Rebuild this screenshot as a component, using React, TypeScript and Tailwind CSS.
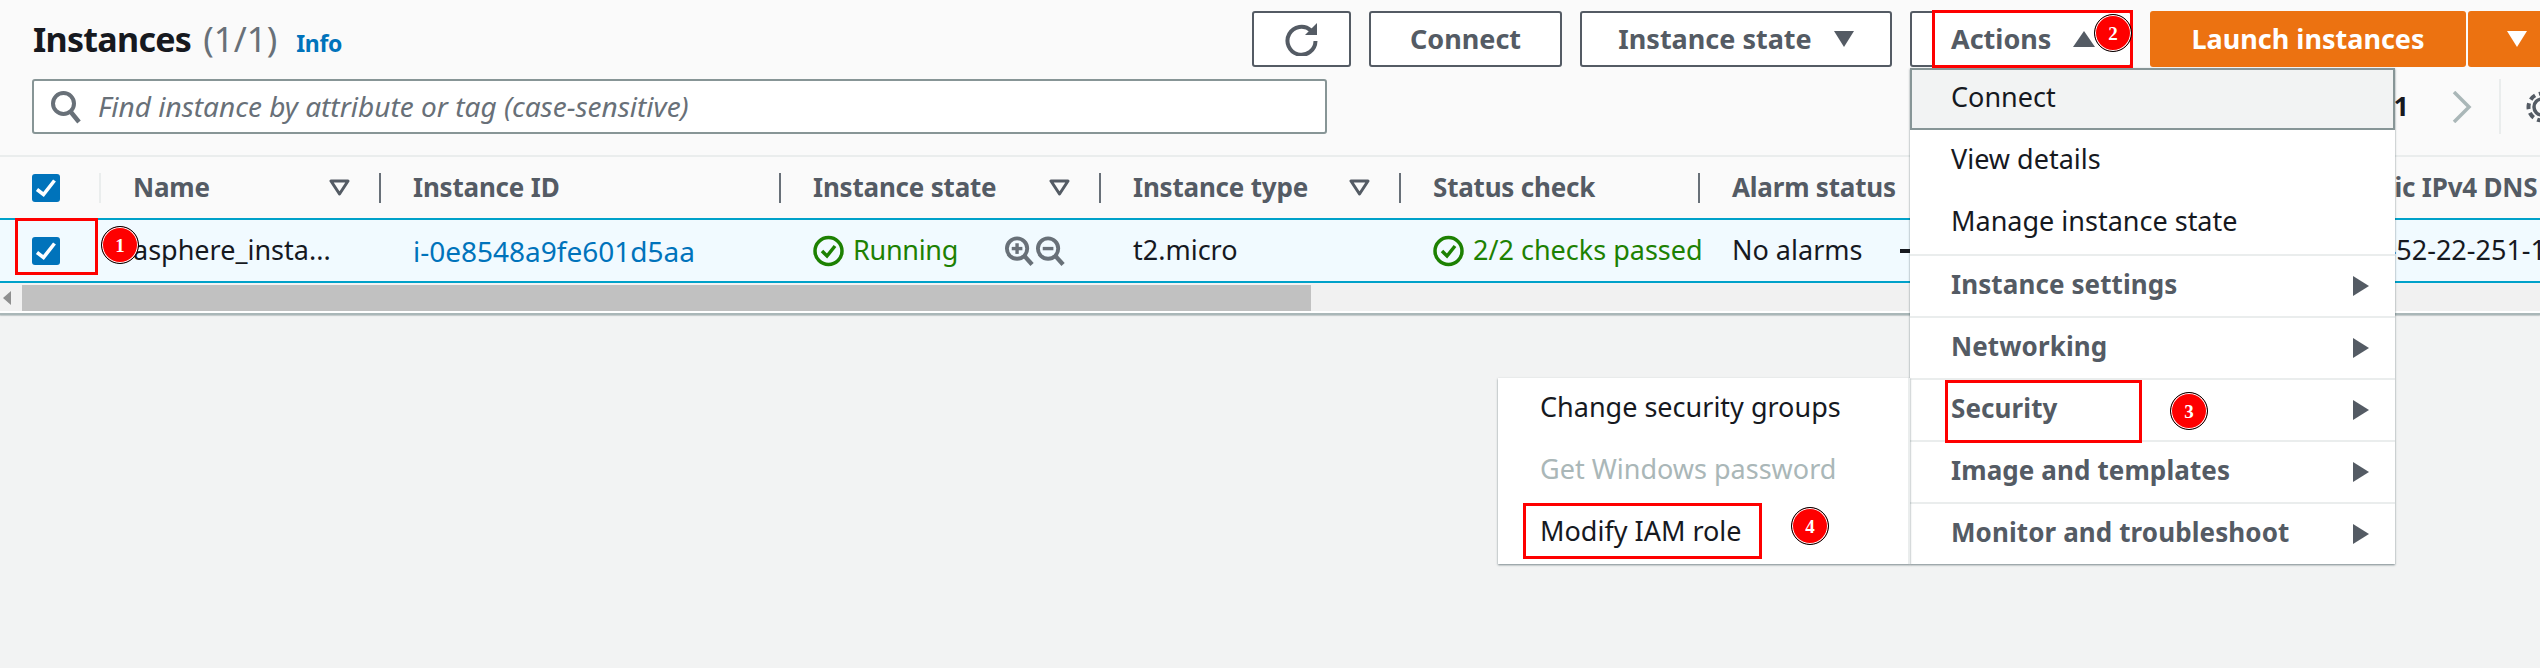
const font = "font-['Noto_Sans','Open_Sans',sans-serif]";

function Badge({ n, className }: { n: number; className: string }) {
  return (
    <span
      className={`absolute z-30 flex h-[38px] w-[38px] items-center justify-center rounded-full border border-black bg-[#fe0000] font-['Liberation_Serif',serif] text-[19px] font-bold leading-none text-white shadow-[inset_0_0_0_1px_#fff] ${className}`}
    >
      {n}
    </span>
  );
}

function RedBox({ className }: { className: string }) {
  return <div className={`absolute z-20 border-[3px] border-[#fe0000] ${className}`} />;
}

function FilterIcon() {
  return (
    <svg width="21" height="17" viewBox="0 0 21 17" className="shrink-0">
      <path d="M2 2h17l-8.5 13z" fill="none" stroke="#545b64" strokeWidth="3" strokeLinejoin="round" />
    </svg>
  );
}

function CheckBox() {
  return (
    <span className="block h-[28px] w-[28px] rounded-[3px] bg-[#0073bb]">
      <svg width="28" height="28" viewBox="0 0 28 28">
        <path d="M5 15.5l6.5 5L22.5 6.5" fill="none" stroke="#fff" strokeWidth="3.6" />
      </svg>
    </span>
  );
}

function StatusOk() {
  return (
    <svg width="31" height="32" viewBox="0 0 31 32" className="shrink-0">
      <circle cx="15.5" cy="16" r="13.5" fill="none" stroke="#1d8102" strokeWidth="3.5" />
      <path d="M9 16l5 5 8-10" fill="none" stroke="#1d8102" strokeWidth="3.5" />
    </svg>
  );
}

function Magnifier({ minus }: { minus?: boolean }) {
  return (
    <svg width="30" height="32" viewBox="0 0 31 32" className="shrink-0">
      <circle cx="13.5" cy="13.5" r="10.5" fill="none" stroke="#687078" strokeWidth="4" />
      <path d="M21 21l8 9" stroke="#687078" strokeWidth="4.5" />
      <path d="M8 13.5h11" stroke="#687078" strokeWidth="3.5" />
      {minus ? null : <path d="M13.5 8v11" stroke="#687078" strokeWidth="3.5" />}
    </svg>
  );
}

function MenuArrow() {
  return (
    <svg width="16" height="20" viewBox="0 0 16 20" className="shrink-0">
      <path d="M0 0l16 10L0 20z" fill="#545b64" />
    </svg>
  );
}

function HeadCell({ label, width, filter, first }: { label: string; width: string; filter?: boolean; first?: boolean }) {
  return (
    <div className={`flex h-full shrink-0 items-center ${width}`}>
      <span className={`h-[30px] w-[2px] shrink-0 ${first ? "bg-[#eaeded]" : "bg-[#687078]"}`} />
      <span className="ml-[32px] whitespace-nowrap pb-[1px] text-[26px] font-bold tracking-[-0.2px] text-[#545b64]">{label}</span>
      {filter ? (
        <span className="ml-auto mr-[29px]">
          <FilterIcon />
        </span>
      ) : null}
    </div>
  );
}

function RowCell({ width, children }: { width: string; children: React.ReactNode }) {
  return (
    <div className={`flex h-full shrink-0 items-center whitespace-nowrap pl-[34px] text-[27px] ${width}`}>
      {children}
    </div>
  );
}

function MenuItem({ label, group, divider }: { label: string; group?: boolean; divider?: boolean }) {
  return (
    <div
      className={`flex h-[62px] items-center justify-between pl-[41px] pr-[26px] ${
        group ? "text-[26px] font-bold tracking-[0.1px] text-[#545b64]" : "text-[27px] text-[#16191f]"
      } ${divider ? "border-t-2 border-[#eaeded]" : ""}`}
    >
      <span className="pb-[4px]">{label}</span>
      {group ? <MenuArrow /> : null}
    </div>
  );
}

export default function App() {
  return (
    <div className={`relative h-[668px] w-[2540px] overflow-hidden bg-[#f2f3f3] ${font}`}>
      <div className="bg-[#fafafa] pt-[11px]">
        <div className="flex h-[56px] items-center pl-[33px]">
          <div className="flex flex-1 items-baseline whitespace-nowrap">
            <span className="text-[34px] font-bold tracking-[-0.7px] text-[#16191f]">Instances</span>
            <span className="ml-[12px] text-[35px] text-[#687078]">(1/1)</span>
            <span className="ml-[19px] text-[23px] font-bold tracking-[-0.4px] text-[#0073bb]">Info</span>
          </div>
          <div className="flex h-full items-stretch text-[27px] font-bold text-[#545b64]">
            <button className="flex w-[99px] items-center justify-center rounded-[3px] border-2 border-[#545b64] bg-white">
              <svg width="34" height="34" viewBox="0 0 34 34">
                <path d="M26 8.5a14 14 0 1 0 4.5 10.5" fill="none" stroke="#545b64" strokeWidth="4" />
                <path d="M20 13h12V1z" fill="#545b64" />
              </svg>
            </button>
            <button className="ml-[18px] w-[193px] rounded-[3px] border-2 border-[#545b64] bg-white">Connect</button>
            <button className="ml-[18px] flex w-[312px] items-center justify-center gap-[22px] rounded-[3px] border-2 border-[#545b64] bg-white">
              Instance state
              <svg width="20" height="16" viewBox="0 0 20 16">
                <path d="M0 0h20L10 16z" fill="#545b64" />
              </svg>
            </button>
            <button className="ml-[18px] flex w-[222px] items-center rounded-[3px] border-2 border-[#545b64] bg-white pl-[39px]">
              Actions
              <svg width="22" height="16" viewBox="0 0 22 16" className="ml-[22px]">
                <path d="M0 16h22L11 0z" fill="#545b64" />
              </svg>
            </button>
            <button className="ml-[18px] w-[316px] rounded-[3px] bg-[#ec7211] text-white">Launch instances</button>
            <button className="ml-[2px] flex w-[72px] items-center rounded-l-[3px] bg-[#ec7211] pl-[39px]">
              <svg width="20" height="16" viewBox="0 0 20 16">
                <path d="M0 0h20L10 16z" fill="#fff" />
              </svg>
            </button>
          </div>
        </div>

        <div className="mt-[12px] flex h-[55px] items-center pl-[32px]">
          <div className="flex h-full w-[1295px] items-center rounded-[3px] border-2 border-[#879596] bg-white pl-[16px]">
            <svg width="32" height="34" viewBox="0 0 32 34" className="shrink-0">
              <circle cx="13.5" cy="13.5" r="10.5" fill="none" stroke="#687078" strokeWidth="4" />
              <path d="M20 21l9 11" stroke="#687078" strokeWidth="4.5" />
            </svg>
            <span className="ml-[16px] whitespace-nowrap pb-[2px] text-[28px] italic text-[#687078]">
              Find instance by attribute or tag (case-sensitive)
            </span>
          </div>
          <span className="ml-auto mr-[43px] text-[27px] font-bold text-[#16191f]">1</span>
          <svg width="20" height="32" viewBox="0 0 20 32" className="mr-[27px] shrink-0">
            <path d="M2 1l15 15L2 31" fill="none" stroke="#aab7b8" strokeWidth="3.5" />
          </svg>
          <span className="h-full w-[2px] shrink-0 bg-[#eaeded]" />
          <svg width="32" height="32" viewBox="0 0 32 32" className="ml-[25px] mr-[-18px] shrink-0">
            <circle cx="16" cy="16" r="8" fill="none" stroke="#545b64" strokeWidth="3.5" />
            <circle cx="16" cy="16" r="13.5" fill="none" stroke="#545b64" strokeWidth="4" strokeDasharray="6 4" />
          </svg>
        </div>

        <div className="mt-[21px] flex h-[63px] items-center border-t-2 border-[#eaeded]">
          <div className="flex w-[99px] shrink-0 pl-[32px]">
            <CheckBox />
          </div>
          <HeadCell first label="Name" filter width="w-[280px]" />
          <HeadCell label="Instance ID" width="w-[400px]" />
          <HeadCell label="Instance state" filter width="w-[320px]" />
          <HeadCell label="Instance type" filter width="w-[300px]" />
          <HeadCell label="Status check" width="w-[299px]" />
          <HeadCell label="Alarm status" width="w-[606px]" />
          <HeadCell label="Public IPv4 DNS" width="w-[236px]" />
        </div>
      </div>

      <div className="flex h-[65px] items-center border-y-2 border-[#00a1c9] bg-[#f1faff] text-[#16191f]">
        <div className="flex w-[99px] shrink-0 pl-[32px]">
          <CheckBox />
        </div>
        <RowCell width="w-[280px]">asphere_insta...</RowCell>
        <RowCell width="w-[400px]">
          <span className="text-[28px] text-[#0073bb]">i-0e8548a9fe601d5aa</span>
        </RowCell>
        <RowCell width="w-[320px]">
          <StatusOk />
          <span className="ml-[9px] w-[151px] tracking-[-0.3px] text-[#1d8102]">Running</span>
          <Magnifier />
          <span className="ml-[1px]">
            <Magnifier minus />
          </span>
        </RowCell>
        <RowCell width="w-[300px]">t2.micro</RowCell>
        <RowCell width="w-[299px]">
          <StatusOk />
          <span className="ml-[9px] text-[#1d8102]">2/2 checks passed</span>
        </RowCell>
        <RowCell width="w-[598px]">
          No alarms
          <span className="ml-[38px] h-[4px] w-[24px] shrink-0 bg-[#16191f]" />
        </RowCell>
        <RowCell width="w-[244px]">
          <span className="ml-[14px]">ec2-52-22-251-198</span>
        </RowCell>
      </div>

      <div className="mt-[2px] flex h-[26px] items-center bg-[#f1f1f1]">
        <svg width="8" height="14" viewBox="0 0 8 14" className="ml-[3px] shrink-0">
          <path d="M8 0v14L0 7z" fill="#8f8f8f" />
        </svg>
        <div className="ml-[11px] h-full w-[1289px] bg-[#c1c1c1]" />
      </div>
      <div className="h-[4px] border-b-2 border-[#aab7b8] bg-white shadow-[0_1px_1px_rgba(0,28,36,0.2)]" />

      {/* open Actions menu */}
      <div className="absolute left-[1910px] top-[68px] z-10 w-[485px] bg-white shadow-[0_1px_2px_rgba(0,28,36,0.5)]">
        <div className="flex h-[62px] items-center border-2 border-[#879596] bg-[#f2f3f3] pb-[3px] pl-[39px] text-[27px] text-[#16191f]">
          Connect
        </div>
        <MenuItem label="View details" />
        <MenuItem label="Manage instance state" />
        <MenuItem group divider label="Instance settings" />
        <MenuItem group divider label="Networking" />
        <MenuItem group divider label="Security" />
        <MenuItem group divider label="Image and templates" />
        <MenuItem group divider label="Monitor and troubleshoot" />
      </div>
      <div className="absolute left-[1498px] top-[378px] z-10 w-[412px] border-r-2 border-[#eaeded] bg-white shadow-[0_1px_2px_rgba(0,28,36,0.5)]">
        <div className="flex h-[62px] items-center pb-[4px] pl-[42px] text-[27px] text-[#16191f]">Change security groups</div>
        <div className="flex h-[62px] items-center pb-[4px] pl-[42px] text-[27px] text-[#aab7b8]">Get Windows password</div>
        <div className="flex h-[62px] items-center pb-[4px] pl-[42px] text-[27px] text-[#16191f]">Modify IAM role</div>
      </div>

      <RedBox className="left-[15px] top-[218px] h-[57px] w-[83px]" />
      <RedBox className="left-[1932px] top-[10px] h-[58px] w-[201px]" />
      <RedBox className="left-[1945px] top-[380px] h-[63px] w-[197px]" />
      <RedBox className="left-[1523px] top-[503px] h-[56px] w-[239px]" />

      <Badge n={1} className="left-[101px] top-[226px]" />
      <Badge n={2} className="left-[2094px] top-[14px]" />
      <Badge n={3} className="left-[2170px] top-[392px]" />
      <Badge n={4} className="left-[1791px] top-[507px]" />
    </div>
  );
}
